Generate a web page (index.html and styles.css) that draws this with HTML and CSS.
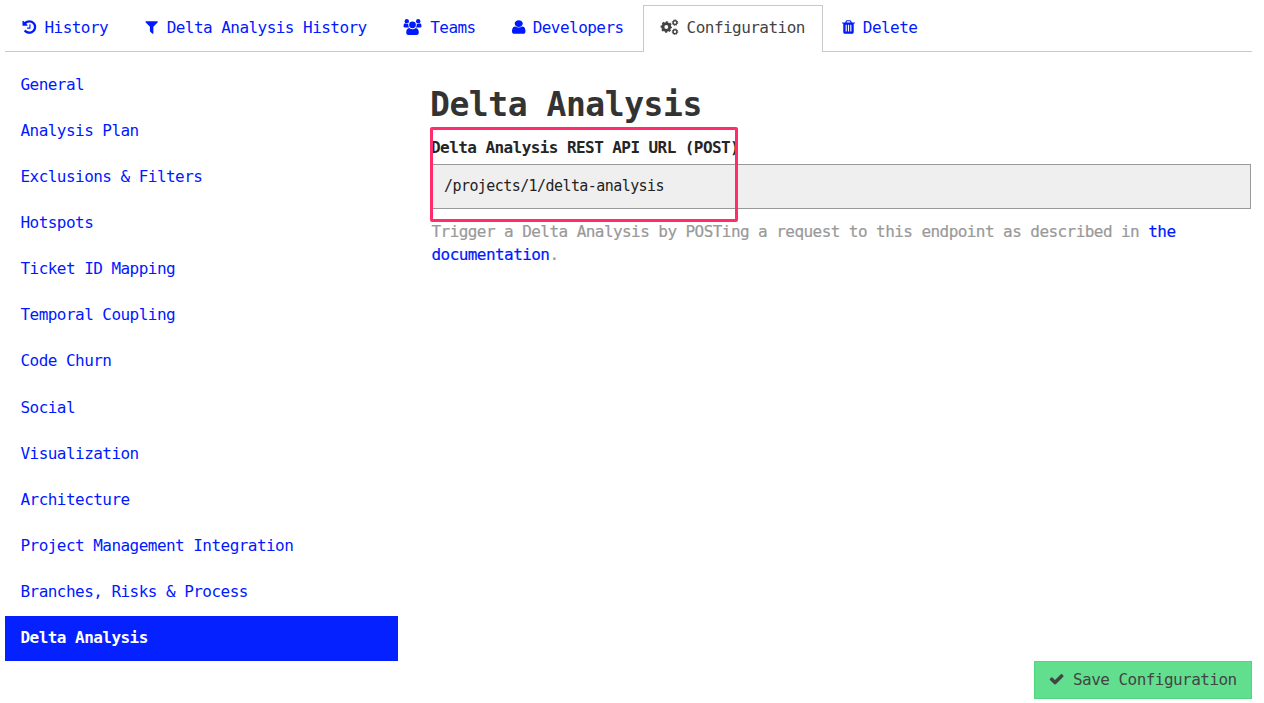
FILE: index.html
```html
<!DOCTYPE html>
<html lang="en">
<head>
<meta charset="utf-8">
<title>Delta Analysis</title>
<link rel="stylesheet" href="styles.css">
</head>
<body>
<nav class="tabs">
  <a class="tab"><svg class="icon" width="15" height="16" viewBox="128 0 1570 1792"><path d="M1664 896q0 156-61 298t-164 245-245 164-298 61q-172 0-327-72.5t-264-204.5q-7-10-6.5-22.5t8.5-20.5l137-138q10-9 25-9 16 2 23 12 73 95 179 147t225 52q104 0 198.5-40.5t163.5-109.5 109.5-163.5 40.5-198.5-40.5-198.5-109.5-163.5-163.5-109.5-198.5-40.5q-98 0-188 35.5t-160 101.5l137 138q31 30 14 69-17 40-59 40h-448q-26 0-45-19t-19-45v-448q0-42 40-59 39-17 69 14l130 129q107-101 244.5-156.5t284.5-55.5q156 0 298 61t245 164 164 245 61 298zm-640-288v448q0 14-9 23t-23 9h-320q-14 0-23-9t-9-23v-64q0-14 9-23t23-9h224v-352q0-14 9-23t23-9h64q14 0 23 9t9 23z"/></svg>History</a>
  <a class="tab"><svg class="icon" width="15" height="16" viewBox="40 0 1680 1792"><path d="M1595 295q17 41-14 70l-493 493v742q0 42-39 59-13 5-25 5-27 0-45-19l-256-256q-19-19-19-45v-486l-493-493q-31-29-14-70 17-39 59-39h1280q42 0 59 39z"/></svg>Delta Analysis History</a>
  <a class="tab"><svg class="icon" width="20" height="17" viewBox="0.5 0 20 17"><circle cx="4.3" cy="2.2" r="2.2"/><circle cx="15.7" cy="2.2" r="2.2"/><path d="M1 7.2Q1 4.3 2.5 4.3Q4 5.3 5.7 4.8Q5.6 7 6.7 8.6H2.5Q1 8.6 1 7.2zM19 7.2Q19 4.3 17.5 4.3Q16 5.3 14.3 4.8Q14.4 7 13.3 8.6H17.5Q19 8.6 19 7.2z"/><circle cx="10" cy="5.8" r="3.4"/><path d="M3.7 13.8Q3.7 9.2 6.7 8.9Q10 11.4 13.3 8.9Q16.3 9.2 16.3 13.8Q16.3 16 14 16H6Q3.7 16 3.7 13.8z"/></svg>Teams</a>
  <a class="tab tab-narrow"><svg class="icon" width="14" height="16" viewBox="256 0 1332 1792" preserveAspectRatio="none"><path d="M1536 1399q0 109-62.5 187t-150.5 78h-854q-88 0-150.5-78t-62.5-187q0-85 8.5-160.5t31.5-152 58.5-131 94-89 134.5-34.5q131 128 313 128t313-128q76 0 134.5 34.5t94 89 58.5 131 31.5 152 8.5 160.5zm-256-887q0 159-112.5 271.5t-271.5 112.5-271.5-112.5-112.5-271.5 112.5-271.5 271.5-112.5 271.5 112.5 112.5 271.5z"/></svg>Developers</a>
  <a class="tab tab-active"><svg class="icon icon-cogs" width="19" height="17" viewBox="0 0 19 17"><circle cx="6.3" cy="8" r="3.4" stroke-width="2.9"/><circle cx="6.3" cy="8" r="4.9" stroke-width="1.7" stroke-dasharray="2.1 1.748" stroke-dashoffset="1.05"/><circle cx="15" cy="3.6" r="1.9" stroke-width="1.4"/><circle cx="15" cy="3.6" r="2.8" stroke-width="1" stroke-dasharray="1.2 1"/><circle cx="15" cy="12.7" r="1.9" stroke-width="1.4"/><circle cx="15" cy="12.7" r="2.8" stroke-width="1" stroke-dasharray="1.2 1"/></svg>Configuration</a>
  <a class="tab tab-last"><svg class="icon" width="13" height="16" viewBox="180 0 1432 1792" preserveAspectRatio="none"><path d="M704 1376v-704q0-14-9-23t-23-9h-64q-14 0-23 9t-9 23v704q0 14 9 23t23 9h64q14 0 23-9t9-23zm256 0v-704q0-14-9-23t-23-9h-64q-14 0-23 9t-9 23v704q0 14 9 23t23 9h64q14 0 23-9t9-23zm256 0v-704q0-14-9-23t-23-9h-64q-14 0-23 9t-9 23v704q0 14 9 23t23 9h64q14 0 23-9t9-23zm-544-992h448l-48-117q-7-9-17-11h-317q-10 2-17 11zm928 32v64q0 14-9 23t-23 9h-96v948q0 83-47 143.5t-113 60.5h-832q-66 0-113-58.5t-47-141.5v-952h-96q-14 0-23-9t-9-23v-64q0-14 9-23t23-9h309l70-167q15-37 54-63t79-26h320q40 0 79 26t54 63l70 167h309q14 0 23 9t9 23z"/></svg>Delete</a>
</nav>
<div class="layout">
  <aside class="sidebar">
    <a class="item">General</a>
    <a class="item">Analysis Plan</a>
    <a class="item">Exclusions &amp; Filters</a>
    <a class="item">Hotspots</a>
    <a class="item">Ticket ID Mapping</a>
    <a class="item">Temporal Coupling</a>
    <a class="item">Code Churn</a>
    <a class="item">Social</a>
    <a class="item">Visualization</a>
    <a class="item">Architecture</a>
    <a class="item">Project Management Integration</a>
    <a class="item">Branches, Risks &amp; Process</a>
    <a class="item item-active">Delta Analysis</a>
  </aside>
  <main class="content">
    <h1 class="title">Delta Analysis</h1>
    <div class="field">
      <label class="label">Delta Analysis REST API URL (POST)</label>
      <div class="input">/projects/1/delta-analysis</div>
      <div class="highlight"></div>
    </div>
    <p class="help">Trigger a Delta Analysis by POSTing a request to this endpoint as described in <a class="link">the documentation</a>.</p>
  </main>
</div>
<div class="actions">
  <button class="save"><svg class="icon" width="16" height="16" viewBox="100 0 1672 1792"><path d="M1671 566q0 40-28 68l-724 724-136 136q-28 28-68 28t-68-28l-136-136-362-362q-28-28-28-68t28-68l136-136q28-28 68-28t68 28l294 295 656-657q28-28 68-28t68 28l136 136q28 28 28 68z"/></svg>Save Configuration</button>
</div>
</body>
</html>
```
FILE: styles.css
```css
* { box-sizing: border-box; }
body {
  margin: 0;
  padding: 5px 12px 0 5px;
  height: 703px;
  overflow: hidden;
  background: #fff;
  color: #333;
  font: 16px/23px "DejaVu Sans Mono", "Liberation Mono", monospace;
  letter-spacing: -0.54px;
}
.icon { flex: none; fill: currentColor; }
.icon-cogs { fill: none; stroke: currentColor; }
.tabs {
  display: flex;
  gap: 2px;
  height: 47px;
  border-bottom: 1px solid #c8c8c8;
}
.tab {
  display: flex;
  align-items: center;
  gap: 7.5px;
  height: 47px;
  padding: 0 16px 4px;
  border: 1px solid transparent;
  border-bottom: 0;
  color: #0019ff;
  white-space: nowrap;
}
.tab-narrow { gap: 7px; }
.tab-active {
  gap: 8px;
  padding-right: 17px;
  border-color: #c8c8c8;
  background: #fff;
  color: #444;
}
.tab-last { gap: 8px; }
.layout { display: flex; gap: 33px; }
.sidebar {
  display: flex;
  flex-direction: column;
  gap: 1.15px;
  width: 393px;
  padding-top: 10px;
}
.item {
  height: 45px;
  padding: 10.65px 15.5px 0;
  color: #0019ff;
}
.item-active {
  background: #0521ff;
  color: #fff;
  font-weight: bold;
}
.content { width: 820px; padding-top: 32px; }
.title {
  margin: 0 0 0 -1px;
  font-size: 33px;
  line-height: 42px;
  letter-spacing: -0.45px;
}
.field { position: relative; padding-top: 10px; }
.label {
  display: block;
  height: 28px;
  color: #252525;
  font-weight: bold;
  letter-spacing: -0.57px;
}
.input {
  height: 45px;
  padding: 10px 12px;
  border: 1px solid #999;
  background: #efefef;
  color: #222;
  font-size: 15px;
  letter-spacing: -0.57px;
}
.highlight {
  position: absolute;
  left: -1px;
  top: 1px;
  width: 308px;
  height: 95px;
  border: 3px solid #ff2d6b;
  border-radius: 2px;
}
.help {
  margin: 11px 0 0 0.5px;
  color: #999;
  letter-spacing: -0.56px;
  -webkit-text-stroke: 0.2px currentColor;
}
.link { color: #0019ff; }
.actions { display: flex; justify-content: flex-end; }
.save {
  display: flex;
  align-items: center;
  gap: 8px;
  width: 218px;
  height: 38px;
  padding: 0 0 1px 14px;
  border: 1px solid #51d67f;
  background: #61df8e;
  color: #444;
  font: inherit;
  letter-spacing: inherit;
  white-space: nowrap;
}
```
